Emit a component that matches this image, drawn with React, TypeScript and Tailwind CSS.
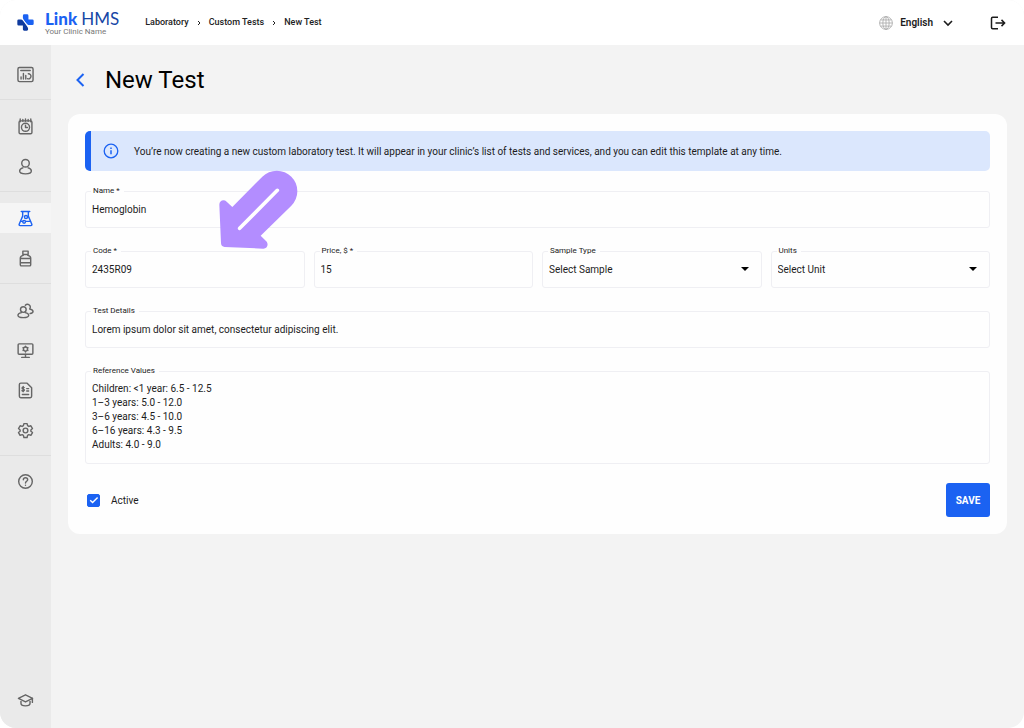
import React from "react";

type IconProps = { children: React.ReactNode };

function Icon({ children }: IconProps) {
  return (
    <svg
      viewBox="0 0 18 18"
      className="size-[17px]"
      fill="none"
      stroke="currentColor"
      strokeWidth="1.5"
      strokeLinecap="round"
      strokeLinejoin="round"
      aria-hidden="true"
    >
      {children}
    </svg>
  );
}

type NavItem = { label: string; icon: React.ReactNode; active?: boolean };

const sections: NavItem[][] = [
  [
    {
      label: "Dashboard",
      icon: (
        <Icon>
          <rect x="1" y="1.5" width="16" height="15" rx="1.6" />
          <path d="M4 4.7h10M4.300 11.500v2.200M6.800 8v5.700M9.300 10v3.700" />
          <path d="M12 8.200a2.700 2.700 0 1 1-.9 5.200" />
        </Icon>
      ),
    },
  ],
  [
    {
      label: "Appointments",
      icon: (
        <Icon>
          <rect x="2.200" y="3" width="13.600" height="13.700" rx="1.400" />
          <path d="M3.400 1v3M6.200 1.500v2M9 1v2.500M11.800 1.500v2M14.600 1v3" />
          <circle cx="9" cy="9.800" r="4.300" />
          <path d="M9 7.500v2.500h2" />
        </Icon>
      ),
    },
    {
      label: "Patients",
      icon: (
        <Icon>
          <circle cx="9" cy="5.600" r="4" />
          <path d="M6.200 10.400C4.200 10.900 2.800 12.200 2.800 13.800c0 2.200 2.800 3 6.200 3s6.200-.8 6.200-3c0-1.600-1.400-2.900-3.400-3.400" />
        </Icon>
      ),
    },
  ],
  [
    {
      label: "Laboratory",
      active: true,
      icon: (
        <Icon>
          <path d="M4.500 1.500h9M6 1.700v4.800L2.300 15c-.3.900.1 1.500 1 1.500h11.400c.9 0 1.300-.6 1-1.500L12 6.500V1.700" />
          <path d="M3.800 12h2.400M9 12h5.300" />
          <circle cx="7.500" cy="12.500" r="1.500" />
          <circle cx="9.500" cy="7.500" r="1.600" />
        </Icon>
      ),
    },
    {
      label: "Pharmacy",
      icon: (
        <Icon>
          <path d="M6.200 1.200h5.600v3.500H6.200zM6.500 4.700v1C4.300 6.300 3.500 7.200 3.500 8.600v7c0 .7.400 1.200 1.100 1.200h8.800c.7 0 1.100-.5 1.100-1.200v-7c0-1.400-.8-2.300-3-2.900v-1M3.500 9h11M3.500 13.500h11" />
        </Icon>
      ),
    },
  ],
  [
    {
      label: "Staff",
      icon: (
        <Icon>
          <circle cx="6.700" cy="8" r="3" />
          <path d="M4.700 11.300C2.500 11.800 1 12.700 1 14c0 1.700 2.300 2.500 5.700 2.500s5.700-.8 5.700-2.500c0-1.300-1.500-2.200-3.700-2.700" />
          <path d="M8.800 3.500a3 3 0 1 1 4.600 3.900c2 .5 3.600 1.300 3.600 2.600 0 1.300-1.200 1.900-3.100 2.100" />
        </Icon>
      ),
    },
    {
      label: "Workstation",
      icon: (
        <Icon>
          <rect x="1.200" y="2" width="15.600" height="11" rx="1" />
          <path d="M9 13v3M5 16.300h8" />
          <circle cx="9" cy="7.500" r="2.200" />
          <path d="M9 4.500v.6M9 9.900v.6M6.400 6l.5.300M11.100 8.700l.5.300M6.400 9l.5-.3M11.100 6.300l.5-.3" />
        </Icon>
      ),
    },
    {
      label: "Invoices",
      icon: (
        <Icon>
          <path d="M4 1.200h6.700L15.500 6v9.200c0 .9-.6 1.500-1.500 1.500H4c-.9 0-1.500-.6-1.500-1.500V2.700c0-.9.600-1.500 1.500-1.500z" />
          <path d="M7.600 5.800C6.700 5.200 5.400 5.600 5.400 6.500c0 1.300 2.400.7 2.400 2 0 1-1.500 1.300-2.500.6M6.600 4.800v5.400M10.300 7h2M10.300 9.500h2M5.700 13.200h6.600" />
        </Icon>
      ),
    },
    {
      label: "Settings",
      icon: (
        <Icon>
          <path d="M7.300 1.700h3.400l.5 2.200 1.300.8 2.200-.7 1.700 2.900-1.700 1.500v1.300l1.700 1.500-1.700 2.900-2.200-.7-1.300.8-.5 2.200H7.300l-.5-2.200-1.300-.8-2.200.7-1.700-2.900 1.700-1.500V8.400L1.600 6.900 3.300 4l2.200.7 1.300-.8z" />
          <circle cx="9" cy="9" r="2.500" />
        </Icon>
      ),
    },
  ],
  [
    {
      label: "Help",
      icon: (
        <Icon>
          <circle cx="9" cy="9" r="7.200" />
          <path d="M6.700 7.200A2.300 2.300 0 0 1 9 5c1.300 0 2.300.9 2.300 2.100C11.300 8.700 9 8.900 9 10.600M9 13v.1" />
        </Icon>
      ),
    },
  ],
];

function NavLink({ item }: { item: NavItem }) {
  return (
    <a
      href="#"
      aria-label={item.label}
      className={
        item.active
          ? "flex h-[30px] items-center justify-center bg-[#f5f5f5] text-[#1b62f2]"
          : "flex h-[30px] items-center justify-center text-[#666666]"
      }
    >
      {item.icon}
    </a>
  );
}

function Sidebar() {
  return (
    <nav aria-label="Main" className="flex w-[51px] shrink-0 flex-col bg-[#eaeaea] pt-[3px] pb-[13px]">
      {sections.map((items, i) => (
        <div
          key={i}
          className={
            i < sections.length - 1
              ? "flex flex-col gap-[10px] border-b border-[#dedede] pt-[11px] pb-[10px]"
              : "flex flex-col gap-[10px] py-[10px]"
          }
        >
          {items.map((item) => (
            <NavLink key={item.label} item={item} />
          ))}
        </div>
      ))}
      <div className="mt-auto">
        <NavLink
          item={{
            label: "Academy",
            icon: (
              <Icon>
                <path d="M9 3l7.500 3.700L9 10.500 1.500 6.700zM4.200 8.300V12c0 1.700 2.200 2.700 4.800 2.700s4.800-1 4.800-2.700V8.300M16.300 6.700V11" />
              </Icon>
            ),
          }}
        />
      </div>
    </nav>
  );
}

function Logo() {
  return (
    <a href="#" className="flex items-center gap-[11px]">
      <svg viewBox="0 0 52 52" className="size-[17px]" aria-hidden="true">
        <path
          fill="#1b62f2"
          d="M18 5q0-4 4-4h9q4 0 4 4v12h12q4 0 4 4v9q0 4-4 4H36Q31 34 28 29L20 17Q18 14 18 11z"
        />
        <path
          fill="#0f3b9e"
          d="M5 17h8q4 0 7 5l11 16q3 4 3 7v2q0 4-4 4h-8q-4 0-4-4V35H5q-4 0-4-4V21q0-4 4-4z"
        />
        <path stroke="#fff" strokeWidth="2.500" d="M15 15L37 39" />
      </svg>
      <span className="flex flex-col">
        <span className="flex gap-1 font-['Lato',sans-serif] text-[17px] leading-[18px]">
          <span className="font-black text-[#1b62f2]">Link</span>
          <span className="text-[#1747a6]">HMS</span>
        </span>
        <span className="text-[8px] leading-[8px] text-[#777777]">Your Clinic Name</span>
      </span>
    </a>
  );
}

function Crumb() {
  return (
    <svg viewBox="0 0 6 8" className="h-[6px] w-[4px]" fill="none" stroke="#222" strokeWidth="1.500" aria-hidden="true">
      <path d="M1.500 1l3 3-3 3" />
    </svg>
  );
}

function Header() {
  return (
    <header className="flex h-[45px] items-center bg-white pr-[18px] pl-[17px]">
      <Logo />
      <nav aria-label="Breadcrumb" className="ml-[26px] flex items-center gap-2 text-[9px] font-medium text-[#222222]">
        <a href="#">Laboratory</a>
        <Crumb />
        <a href="#">Custom Tests</a>
        <Crumb />
        <span>New Test</span>
      </nav>
      <div className="ml-auto flex items-center">
        <button type="button" className="flex items-center gap-[7px] text-[10px] font-semibold text-[#1c1c1c]">
          <svg viewBox="0 0 16 16" className="size-[14px]" fill="none" stroke="#adadad" strokeWidth="1" aria-hidden="true">
            <circle cx="8" cy="8" r="7.300" />
            <ellipse cx="8" cy="8" rx="3.600" ry="7.300" />
            <path d="M8 .7v14.600M.7 8h14.600M1.700 4.500h12.600M1.700 11.500h12.600" />
          </svg>
          English
          <svg viewBox="0 0 12 12" className="ml-[2px] size-[12px]" fill="none" stroke="currentColor" strokeWidth="1.600" aria-hidden="true">
            <path d="M2 4l4 4 4-4" />
          </svg>
        </button>
        <button type="button" aria-label="Log out" className="ml-[36px]">
          <svg viewBox="0 0 16 14" className="h-[14px] w-[16px]" fill="none" stroke="#1c1c1c" strokeWidth="1.500" aria-hidden="true">
            <path d="M8 1.200H2.700Q1.500 1.200 1.500 2.400v9.200q0 1.200 1.200 1.200H8M5.500 7h9M11.500 3.900L14.600 7l-3.100 3.100" />
          </svg>
        </button>
      </div>
    </header>
  );
}

type FieldProps = { id: string; label: string; children: React.ReactNode };

function Field({ id, label, children }: FieldProps) {
  return (
    <fieldset className="min-w-0 rounded-[3px] border border-[#efeff3] px-[1px] pb-[6px]">
      <legend className="ml-1 h-3 px-[2px] text-[8px] leading-3 text-[#222222]">
        <label htmlFor={id} className="block pr-[2px]">
          {label}
        </label>
      </legend>
      {children}
    </fieldset>
  );
}

function TextField({ id, label, value }: { id: string; label: string; value: string }) {
  return (
    <Field id={id} label={label}>
      <input id={id} type="text" defaultValue={value} className="block h-6 w-full bg-transparent px-[5px] outline-none" />
    </Field>
  );
}

function SelectField({ id, label, value }: { id: string; label: string; value: string }) {
  return (
    <Field id={id} label={label}>
      <div className="grid items-center">
        <select
          id={id}
          className="col-start-1 row-start-1 block h-6 w-full appearance-none bg-transparent px-[5px] outline-none"
        >
          <option>{value}</option>
        </select>
        <svg
          viewBox="0 0 8 4"
          className="pointer-events-none col-start-1 row-start-1 mr-[11px] h-[4px] w-[8px] justify-self-end"
          aria-hidden="true"
        >
          <path d="M0 0h8L4 4z" fill="#000" />
        </svg>
      </div>
    </Field>
  );
}

function PointerArrow() {
  return (
    <svg
      viewBox="476 180 237 240"
      className="pointer-events-none absolute top-[56px] left-[151px] h-[80px] w-[79px]"
      aria-hidden="true"
    >
      <path
        fill="#b38dff"
        d="M516 291L606 200A61 61 0 1 1 693 287L601 377L617 393C627 403 620 417 608 416L493 411Q482 410 482 399L477 284C477 272 490 267 499 275Z"
      />
      <path stroke="#fff" strokeWidth="11" strokeLinecap="round" d="M538 355L651 241" />
    </svg>
  );
}

const referenceValues = [
  "Children: <1 year: 6.5 - 12.5",
  "1–3 years: 5.0 - 12.0",
  "3–6 years: 4.5 - 10.0",
  "6–16 years: 4.3 - 9.5",
  "Adults: 4.0 - 9.0",
].join("\n");

export default function App() {
  return (
    <div className="flex min-h-screen flex-col overflow-hidden rounded-[16px] bg-[#f3f3f3] font-['Roboto',sans-serif] text-[10px] text-[#1c1c1c]">
      <Header />
      <div className="flex grow">
        <Sidebar />
        <main className="grow px-[17px] pt-[17px]">
          <div className="flex items-center gap-[19px] pl-[6px]">
            <a href="#" aria-label="Back">
              <svg viewBox="0 0 12 14" className="h-[14px] w-[12px]" fill="none" stroke="#1b62f2" strokeWidth="2" aria-hidden="true">
                <path d="M9.500 1L3.500 7l6 6" />
              </svg>
            </a>
            <h1 className="text-2xl leading-[36px] text-black">New Test</h1>
          </div>

          <form className="relative mt-4 flex flex-col rounded-[12px] bg-[#fefefe] p-[17px]">
            <div
              role="note"
              className="flex h-[40px] items-center gap-[15px] rounded-[5px] border-l-[6px] border-[#1b62f2] bg-[#dbe7fd] pl-3"
            >
              <svg viewBox="0 0 16 16" className="size-[16px]" fill="none" stroke="#1b62f2" strokeWidth="1.300" aria-hidden="true">
                <circle cx="8" cy="8" r="6.800" />
                <path d="M8 7.300v4M8 4.500v1.400" strokeWidth="1.500" />
              </svg>
              <p>
                You’re now creating a new custom laboratory test. It will appear in your clinic’s list of tests and
                services, and you can edit this template at any time.
              </p>
            </div>

            <div className="mt-[14px] flex flex-col gap-[17px]">
              <TextField id="name" label="Name *" value="Hemoglobin" />
              <div className="grid grid-cols-4 gap-[9px]">
                <TextField id="code" label="Code *" value="2435R09" />
                <TextField id="price" label="Price, $ *" value="15" />
                <SelectField id="sample" label="Sample Type" value="Select Sample" />
                <SelectField id="units" label="Units" value="Select Unit" />
              </div>
              <TextField id="details" label="Test Details" value="Lorem ipsum dolor sit amet, consectetur adipiscing elit." />
              <Field id="reference" label="Reference Values">
                <textarea
                  id="reference"
                  rows={5}
                  defaultValue={referenceValues}
                  className="block h-[80px] w-full resize-none bg-transparent px-[5px] pt-[5px] leading-[14px] outline-none"
                />
              </Field>
            </div>

            <div className="mt-[19px] flex items-center justify-between">
              <label className="flex items-center gap-[11px] pl-[2px]">
                <span className="grid items-center justify-items-center">
                  <input
                    type="checkbox"
                    defaultChecked
                    className="peer col-start-1 row-start-1 size-[13px] appearance-none rounded-[2px] border border-[#1b62f2] checked:bg-[#1b62f2]"
                  />
                  <svg
                    viewBox="0 0 10 8"
                    className="pointer-events-none invisible col-start-1 row-start-1 h-[8px] w-[10px] peer-checked:visible"
                    fill="none"
                    stroke="#fff"
                    strokeWidth="1.400"
                    aria-hidden="true"
                  >
                    <path d="M1.200 4.200l2.400 2.400 5-5.200" />
                  </svg>
                </span>
                Active
              </label>
              <button type="submit" className="h-[34px] w-[44px] rounded-[3px] bg-[#1b62f2] font-bold text-white">
                SAVE
              </button>
            </div>
            <PointerArrow />
          </form>
        </main>
      </div>
    </div>
  );
}
